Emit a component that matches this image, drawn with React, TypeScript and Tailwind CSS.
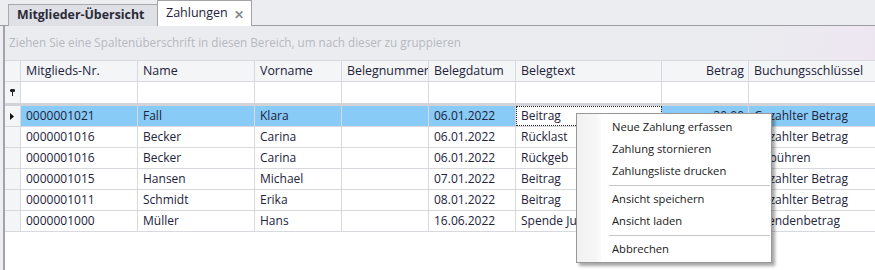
import React from "react";

const COLS = "grid grid-cols-[16px_117px_117px_87px_87px_87px_146px_87px_1fr]";
const LINE = "border-[#d8d9df]";

type Row = [string, string, string, string, string, string, string, string];

const rows: Row[] = [
  ["0000001021", "Fall", "Klara", "", "06.01.2022", "Beitrag", "30,00", "Gezahlter Betrag"],
  ["0000001016", "Becker", "Carina", "", "06.01.2022", "Rücklast", "", "Gezahlter Betrag"],
  ["0000001016", "Becker", "Carina", "", "06.01.2022", "Rückgeb", "", "Gebühren"],
  ["0000001015", "Hansen", "Michael", "", "07.01.2022", "Beitrag", "", "Gezahlter Betrag"],
  ["0000001011", "Schmidt", "Erika", "", "08.01.2022", "Beitrag", "", "Gezahlter Betrag"],
  ["0000001000", "Müller", "Hans", "", "16.06.2022", "Spende Juni", "", "Spendenbetrag"],
];

const headers = [
  "Mitglieds-Nr.",
  "Name",
  "Vorname",
  "Belegnummer",
  "Belegdatum",
  "Belegtext",
  "Betrag",
  "Buchungsschlüssel",
];

function Pin() {
  return (
    <svg width="5" height="8" viewBox="0 0 5 8">
      <rect x="0" y="0" width="5" height="3" rx="1.2" fill="#222" />
      <rect x="2" y="2" width="1" height="5" fill="#222" />
    </svg>
  );
}

function Arrow() {
  return (
    <svg width="4" height="7" viewBox="0 0 4 7">
      <path d="M0 0 L4 3.5 L0 7 Z" fill="#111" />
    </svg>
  );
}

function MenuItem({ label }: { label: string }) {
  return (
    <div className="h-[22px] flex items-center pl-[35px] text-[11.2px] text-[#1a1a1a]">{label}</div>
  );
}

function MenuSep() {
  return (
    <div className="h-[6px] flex items-center pl-[32px] pr-[1px]">
      <div className="w-full h-[1px] bg-[#c6c6c6]" />
    </div>
  );
}

export default function App() {
  return (
    <div
      className="relative w-[875px] h-[270px] overflow-hidden bg-[#ecedf1] text-[#22223a] flex flex-col"
      style={{ fontFamily: '"Open Sans", "Noto Sans", sans-serif' }}
    >
      {/* Tab bar */}
      <div className="h-[26px] flex items-end border-b border-[#9c9ca2] pl-[8px] shrink-0">
        <div className="h-[22px] w-[149px] bg-[#dfe0e5] border-l border-t border-[#a8a9ae] flex items-center pl-[8px] text-[12.4px] font-bold text-[#2a2a38] mb-[-1px] pb-[1px] whitespace-nowrap">
          Mitglieder-Übersicht
        </div>
        <div className="relative h-[26px] w-[95px] bg-white border border-b-0 border-[#a3a4a9] flex items-center pl-[8px] text-[12.5px] text-[#22223a] mb-[-1px] z-10">
          Zahlungen
          <span className="absolute right-[7px] top-[5px] text-[12px] font-bold text-[#8a8a90]">✕</span>
        </div>
      </div>

      <div className="flex flex-1 min-h-0">
        <div className="w-[3px] bg-[#eeeef2]" />
        <div className="w-[2px] bg-[#a3a4aa]" />
        <div className="flex-1 flex flex-col bg-white min-w-0">
          {/* Group panel */}
          <div className="h-[34px] shrink-0 flex items-center pl-[4px] text-[11.7px] text-[#b6b8c0] whitespace-nowrap bg-[linear-gradient(100deg,#ebecf0_0%,#ebecf0_85%,#ede6f1_100%)]">
            Ziehen Sie eine Spaltenüberschrift in diesen Bereich, um nach dieser zu gruppieren
          </div>

          {/* Header */}
          <div className={`${COLS} h-[22px] border-t border-b ${LINE} bg-[#f4f5f7] text-[12.4px] shrink-0`}>
            <div className={`border-r ${LINE}`} />
            {headers.map((h, i) => (
              <div
                key={h}
                className={`flex items-center px-[5px] ${i < headers.length - 1 ? `border-r ${LINE}` : ""} ${
                  h === "Betrag" ? "justify-end pr-[4px]" : ""
                } whitespace-nowrap overflow-hidden`}
              >
                {h}
              </div>
            ))}
          </div>

          {/* Filter row */}
          <div className={`${COLS} h-[24px] border-b-[3px] border-[#d2d3d8] bg-white shrink-0`}>
            <div className={`border-r ${LINE} bg-[#f4f5f7] flex items-center justify-center pr-[1px]`}>
              <Pin />
            </div>
            {headers.map((h, i) => (
              <div key={h} className={i < headers.length - 1 ? `border-r ${LINE}` : ""} />
            ))}
          </div>

          {/* Data rows */}
          {rows.map((r, ri) => {
            const sel = ri === 0;
            return (
              <div key={ri} className={`${COLS} h-[21px] border-b ${LINE} text-[12px] shrink-0`}>
                <div className={`border-r ${LINE} bg-[#f4f5f7] flex items-center justify-center pr-[1px]`}>
                  {sel ? <Arrow /> : null}
                </div>
                {r.map((c, ci) => {
                  const focus = sel && ci === 5;
                  const bg = sel && !focus ? "bg-[#88cbf6]" : "bg-white";
                  return (
                    <div
                      key={ci}
                      className={`flex items-center whitespace-nowrap overflow-hidden ${bg} ${
                        ci < r.length - 1 ? `border-r ${LINE}` : ""
                      } ${ci === 6 ? "justify-end pr-[4px] pl-[5px]" : "px-[5px]"} ${
                        focus ? "outline-1 outline-dotted outline-[#222] -outline-offset-1" : ""
                      }`}
                    >
                      {c}
                    </div>
                  );
                })}
              </div>
            );
          })}
        </div>
      </div>

      {/* Context menu */}
      <div className="absolute left-[576px] top-[113px] w-[196px] h-[150px] bg-white border border-[#979797] shadow-[3px_3px_3px_rgba(0,0,0,0.35)] py-[2px] z-20">
        <div className="absolute left-0 top-0 bottom-0 w-[24px] bg-[linear-gradient(90deg,#f1f1f1,#f7f7f7_80%,#fbfbfb)]" />
        <div className="relative">
          <MenuItem label="Neue Zahlung erfassen" />
          <MenuItem label="Zahlung stornieren" />
          <MenuItem label="Zahlungsliste drucken" />
          <MenuSep />
          <MenuItem label="Ansicht speichern" />
          <MenuItem label="Ansicht laden" />
          <MenuSep />
          <MenuItem label="Abbrechen" />
        </div>
      </div>
    </div>
  );
}
